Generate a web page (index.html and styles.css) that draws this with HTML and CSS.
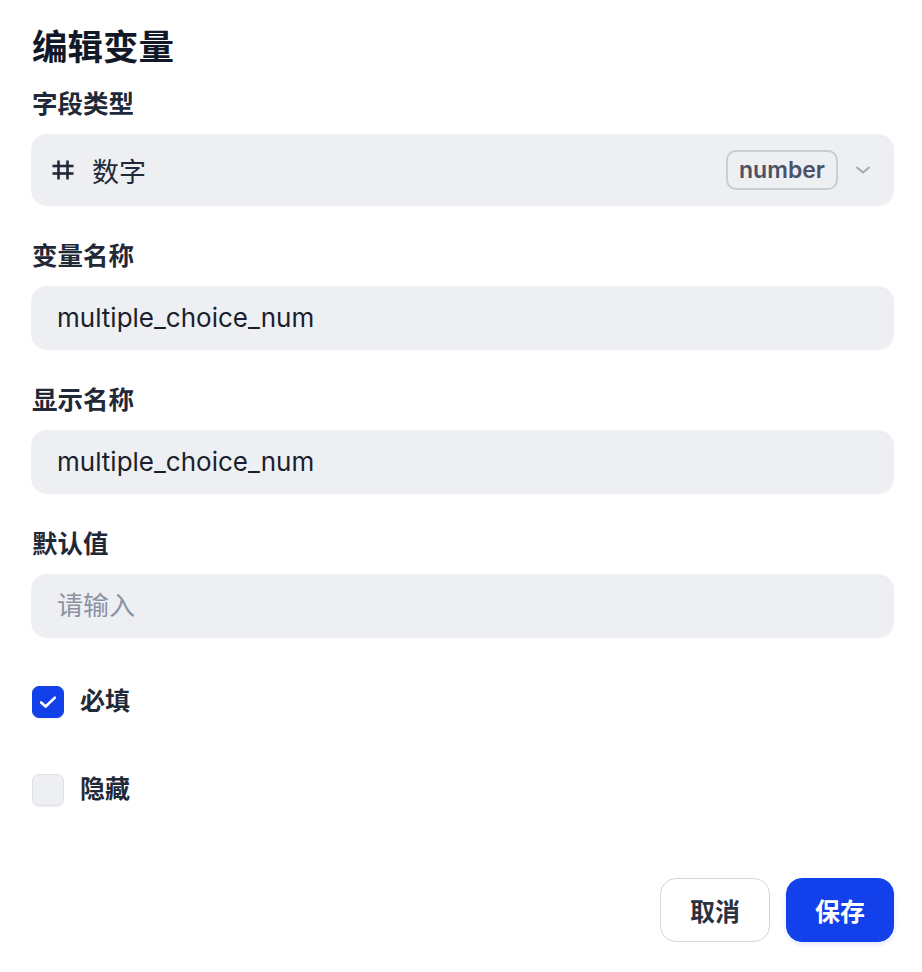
FILE: index.html
```html
<!DOCTYPE html>
<html lang="zh-CN">

<head>
    <meta charset="UTF-8">
    <meta name="viewport" content="width=device-width, initial-scale=1.0">
    <title>编辑变量</title>
    <link rel="stylesheet" href="styles.css">
</head>

<body>
    <div class="dialog">
        <h1>编辑变量</h1>

        <div class="field">
            <label class="field-label">字段类型</label>
            <div class="select">
                <svg class="type-icon" viewBox="0 0 22 20" fill="none" stroke="currentColor" stroke-width="2.6">
                    <line x1="6.5" y1="0.5" x2="6.5" y2="19.5" />
                    <line x1="15.5" y1="0.5" x2="15.5" y2="19.5" />
                    <line x1="0.5" y1="6" x2="21.5" y2="6" />
                    <line x1="0.5" y1="13.5" x2="21.5" y2="13.5" />
                </svg>
                <span class="select-text">数字</span>
                <span class="badge">number</span>
                <svg class="chevron" viewBox="0 0 16 16" fill="none" stroke="currentColor" stroke-width="1.8"
                    stroke-linecap="round" stroke-linejoin="round">
                    <polyline points="2,5.5 8,10.5 14,5.5" />
                </svg>
            </div>
        </div>

        <div class="field">
            <label class="field-label">变量名称</label>
            <div class="input">multiple_choice_num</div>
        </div>

        <div class="field">
            <label class="field-label">显示名称</label>
            <div class="input">multiple_choice_num</div>
        </div>

        <div class="field">
            <label class="field-label">默认值</label>
            <div class="input placeholder">请输入</div>
        </div>

        <div class="checks">
            <div class="check-row">
                <span class="checkbox checked">
                    <svg viewBox="0 0 16 16" fill="none" stroke="#fff" stroke-width="1.9" stroke-linecap="round"
                        stroke-linejoin="round">
                        <polyline points="3,8.3 6.3,11.3 13,4.8" />
                    </svg>
                </span>
                <span class="check-label">必填</span>
            </div>
            <div class="check-row">
                <span class="checkbox"></span>
                <span class="check-label">隐藏</span>
            </div>
        </div>

        <div class="actions">
            <button class="btn btn-cancel">取消</button>
            <button class="btn btn-save">保存</button>
        </div>
    </div>
</body>

</html>
```

FILE: styles.css
```css
* {
    margin: 0;
    padding: 0;
    box-sizing: border-box;
}

body {
    font-family: Inter, "Noto Sans CJK SC", sans-serif;
    background-color: #fff;
    color: #1d2433;
}

.dialog {
    width: 922px;
    padding: 24px 28px 30px 31px;
}

.dialog h1 {
    font-size: 35.5px;
    line-height: 48px;
    font-weight: 700;
    color: #111827;
    padding-left: 1px;
    margin-bottom: 14px;
}

.field {
    margin-bottom: 32px;
}

.field-label {
    display: block;
    font-size: 25.5px;
    line-height: 36px;
    font-weight: 700;
    color: #1f2937;
    padding-left: 1px;
    margin-bottom: 12px;
}

.select {
    display: flex;
    align-items: center;
    height: 72px;
    padding: 0 23px 0 21px;
    background-color: #eeeff3;
    border-radius: 16px;
    color: #1f2937;
}

.type-icon {
    width: 22px;
    height: 20px;
    margin-right: 18px;
}

.select-text {
    flex: 1;
    font-size: 27px;
}

.badge {
    font-size: 23px;
    font-weight: 600;
    color: #4b5266;
    height: 40px;
    line-height: 36px;
    padding: 0 11px;
    border: 2px solid #caccd3;
    border-radius: 10px;
    margin-right: 17px;
}

.chevron {
    width: 16px;
    height: 16px;
    color: #a0a5b0;
}

.input {
    height: 64px;
    line-height: 64px;
    padding: 0 26px;
    background-color: #eeeff3;
    border-radius: 16px;
    font-size: 26px;
    color: #1a1f2c;
}

.input.placeholder {
    color: #8b93a3;
}

.checks {
    display: flex;
    flex-direction: column;
    gap: 56px;
    margin-top: 48px;
    padding-left: 1px;
}

.check-row {
    display: flex;
    align-items: center;
    gap: 16px;
    height: 32px;
}

.checkbox {
    width: 32px;
    height: 32px;
    border-radius: 7px;
    background-color: #eeeff3;
    border: 1px solid #dfe1e6;
    box-shadow: 0 1px 2px rgba(0, 0, 0, 0.06);
    display: flex;
    align-items: center;
    justify-content: center;
}

.checkbox.checked {
    background-color: #1240ea;
    border-color: #1240ea;
}

.checkbox svg {
    width: 22px;
    height: 22px;
}

.check-label {
    font-size: 25px;
    line-height: 32px;
    font-weight: 700;
    color: #1f2937;
    margin-top: -2px;
}

.actions {
    display: flex;
    justify-content: flex-end;
    gap: 16px;
    margin-top: 72px;
}

.btn {
    font-family: inherit;
    font-size: 25px;
    font-weight: 700;
    height: 64px;
    padding: 0 29px;
    border-radius: 16px;
    cursor: pointer;
}

.btn-cancel {
    background-color: #fff;
    color: #2a3140;
    border: 1px solid #d3d5da;
}

.btn-save {
    background-color: #1240ea;
    color: #fff;
    border: 1px solid #1240ea;
    padding: 0 28px;
    box-shadow: 0 2px 4px rgba(18, 64, 234, 0.15);
}
```
